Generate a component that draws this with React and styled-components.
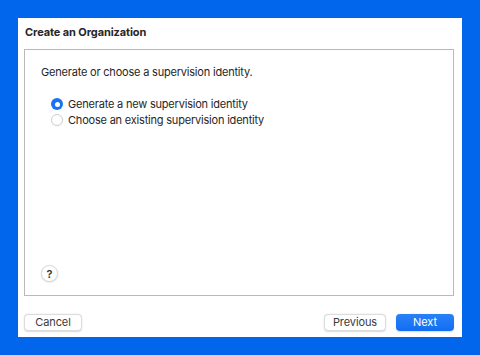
import React from "react";
import styled, { createGlobalStyle } from "styled-components";

const Global = createGlobalStyle`
  html, body { margin: 0; padding: 0; background: #0266ec; }
  body { font-family: Inter, "Liberation Sans", sans-serif; -webkit-font-smoothing: antialiased; }
`;

const Page = styled.div`
  width: 480px;
  height: 355px;
  padding: 18px 0 0 18px;
  box-sizing: border-box;
`;

const Window = styled.div`
  width: 444px;
  height: 319px;
  background: #ffffff;
  display: flex;
  flex-direction: column;
  padding: 0 8px 0 6px;
  box-sizing: border-box;
`;

const Title = styled.div`
  height: 31px;
  padding: 7px 0 0 1px;
  box-sizing: border-box;
  font-size: 11px;
  line-height: 14px;
  font-weight: 700;
  letter-spacing: -0.1px;
  color: #262626;
`;

const Group = styled.div`
  height: 247px;
  border: 1px solid #b9b9b9;
  box-sizing: border-box;
  display: flex;
  flex-direction: column;
  padding: 15px 0 13px 16px;
`;

const Prompt = styled.div`
  font-size: 11px;
  line-height: 14px;
  letter-spacing: -0.2px;
  color: #262626;
`;

const Radios = styled.div`
  display: flex;
  flex-direction: column;
  margin: 17px 0 0 10px;
`;

const RadioRow = styled.label`
  display: flex;
  align-items: center;
  gap: 5px;
  height: 16px;
  font-size: 11px;
  letter-spacing: -0.2px;
  color: #262626;
`;

const RadioDot = styled.span`
  width: 12px;
  height: 12px;
  border-radius: 50%;
  box-sizing: border-box;
  display: flex;
  align-items: center;
  justify-content: center;
  background: ${(p) => (p.$on ? "#1a73f4" : "#ffffff")};
  border: ${(p) => (p.$on ? "none" : "1px solid #cfcfcf")};
  box-shadow: ${(p) => (p.$on ? "none" : "0 0.5px 1px rgba(0,0,0,0.06)")};
  &::after {
    content: "";
    display: ${(p) => (p.$on ? "block" : "none")};
    width: 5px;
    height: 5px;
    border-radius: 50%;
    background: #ffffff;
  }
`;

const Help = styled.button`
  margin-top: auto;
  width: 17px;
  height: 17px;
  border-radius: 50%;
  border: 1px solid #dadada;
  background: #ffffff;
  box-shadow: 0 0.5px 1.5px rgba(0,0,0,0.18);
  padding: 0;
  font-family: inherit;
  font-size: 11px;
  font-weight: 600;
  color: #333;
  display: flex;
  align-items: center;
  justify-content: center;
`;

const Footer = styled.div`
  display: flex;
  align-items: center;
  margin-top: 18px;
  gap: 10px;
`;

const Spacer = styled.div`
  flex: 1;
`;

const Button = styled.button`
  width: ${(p) => p.$w}px;
  height: 17px;
  border-radius: 4px;
  padding: 0;
  font-family: inherit;
  font-size: 11px;
  line-height: 15px;
  letter-spacing: -0.1px;
  box-sizing: border-box;
  color: ${(p) => (p.$primary ? "#ffffff" : "#3a3a3a")};
  background: ${(p) => (p.$primary ? "linear-gradient(#2a80f7, #126ef3)" : "#ffffff")};
  border: ${(p) => (p.$primary ? "none" : "1px solid #dcdcdc")};
  box-shadow: 0 0.5px 1.5px rgba(0, 0, 0, 0.15);
`;

export default function App() {
  return (
    <>
      <Global />
      <Page>
        <Window>
          <Title>Create an Organization</Title>
          <Group>
            <Prompt>Generate or choose a supervision identity.</Prompt>
            <Radios>
              <RadioRow>
                <RadioDot $on />
                Generate a new supervision identity
              </RadioRow>
              <RadioRow>
                <RadioDot />
                Choose an existing supervision identity
              </RadioRow>
            </Radios>
            <Help>?</Help>
          </Group>
          <Footer>
            <Button $w={58}>Cancel</Button>
            <Spacer />
            <Button $w={62}>Previous</Button>
            <Button $w={58} $primary>Next</Button>
          </Footer>
        </Window>
      </Page>
    </>
  );
}
